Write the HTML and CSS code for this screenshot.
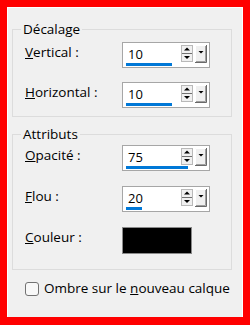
FILE: index.html
```html
<!DOCTYPE html>
<html lang="fr">
<head>
<meta charset="utf-8">
<title>Ombre portée</title>
<link rel="stylesheet" href="styles.css">
</head>
<body>
<div class="panel">
  <fieldset class="group g1">
    <legend>Décalage</legend>
    <div class="rows">
      <label class="lbl"><u>V</u>ertical :</label>
      <div class="spin">
        <div class="spin-top"><span class="val">10</span>
          <svg class="updown" width="12" height="17" viewBox="0 0 12 17"><rect x="0.5" y="0.5" width="11" height="16" fill="#f0f0f0" stroke="#b9b9b9"/><line x1="1" y1="8.5" x2="11" y2="8.5" stroke="#707070"/><path d="M6 2.5 L9 5.5 H3 Z" fill="#000"/><path d="M3 11 H9 L6 14 Z" fill="#000"/></svg>
          <svg class="drop" width="12" height="18" viewBox="0 0 12 18"><rect x="0" y="0" width="12" height="18" fill="#f0f0f0"/><path d="M0.5 17.5 V0.5 H11.5" fill="none" stroke="#fff"/><path d="M11.5 0 V17.5 H0" fill="none" stroke="#696969"/><path d="M10.5 1 V16.5 H1" fill="none" stroke="#a0a0a0"/><path d="M3.5 6 H8.5 L6 8.5 Z" fill="#000"/></svg>
        </div>
        <span class="bar" style="width:46px"></span>
      </div>
      <label class="lbl"><u>H</u>orizontal :</label>
      <div class="spin">
        <div class="spin-top"><span class="val">10</span>
          <svg class="updown" width="12" height="17" viewBox="0 0 12 17"><rect x="0.5" y="0.5" width="11" height="16" fill="#f0f0f0" stroke="#b9b9b9"/><line x1="1" y1="8.5" x2="11" y2="8.5" stroke="#707070"/><path d="M6 2.5 L9 5.5 H3 Z" fill="#000"/><path d="M3 11 H9 L6 14 Z" fill="#000"/></svg>
          <svg class="drop" width="12" height="18" viewBox="0 0 12 18"><rect x="0" y="0" width="12" height="18" fill="#f0f0f0"/><path d="M0.5 17.5 V0.5 H11.5" fill="none" stroke="#fff"/><path d="M11.5 0 V17.5 H0" fill="none" stroke="#696969"/><path d="M10.5 1 V16.5 H1" fill="none" stroke="#a0a0a0"/><path d="M3.5 6 H8.5 L6 8.5 Z" fill="#000"/></svg>
        </div>
        <span class="bar" style="width:46px"></span>
      </div>
    </div>
  </fieldset>
  <fieldset class="group g2">
    <legend>Attributs</legend>
    <div class="rows">
      <label class="lbl"><u>O</u>pacité :</label>
      <div class="spin">
        <div class="spin-top"><span class="val">75</span>
          <svg class="updown" width="12" height="17" viewBox="0 0 12 17"><rect x="0.5" y="0.5" width="11" height="16" fill="#f0f0f0" stroke="#b9b9b9"/><line x1="1" y1="8.5" x2="11" y2="8.5" stroke="#707070"/><path d="M6 2.5 L9 5.5 H3 Z" fill="#000"/><path d="M3 11 H9 L6 14 Z" fill="#000"/></svg>
          <svg class="drop" width="12" height="18" viewBox="0 0 12 18"><rect x="0" y="0" width="12" height="18" fill="#f0f0f0"/><path d="M0.5 17.5 V0.5 H11.5" fill="none" stroke="#fff"/><path d="M11.5 0 V17.5 H0" fill="none" stroke="#696969"/><path d="M10.5 1 V16.5 H1" fill="none" stroke="#a0a0a0"/><path d="M3.5 6 H8.5 L6 8.5 Z" fill="#000"/></svg>
        </div>
        <span class="bar" style="width:62px"></span>
      </div>
      <label class="lbl"><u>F</u>lou :</label>
      <div class="spin">
        <div class="spin-top"><span class="val">20</span>
          <svg class="updown" width="12" height="17" viewBox="0 0 12 17"><rect x="0.5" y="0.5" width="11" height="16" fill="#f0f0f0" stroke="#b9b9b9"/><line x1="1" y1="8.5" x2="11" y2="8.5" stroke="#707070"/><path d="M6 2.5 L9 5.5 H3 Z" fill="#000"/><path d="M3 11 H9 L6 14 Z" fill="#000"/></svg>
          <svg class="drop" width="12" height="18" viewBox="0 0 12 18"><rect x="0" y="0" width="12" height="18" fill="#f0f0f0"/><path d="M0.5 17.5 V0.5 H11.5" fill="none" stroke="#fff"/><path d="M11.5 0 V17.5 H0" fill="none" stroke="#696969"/><path d="M10.5 1 V16.5 H1" fill="none" stroke="#a0a0a0"/><path d="M3.5 6 H8.5 L6 8.5 Z" fill="#000"/></svg>
        </div>
        <span class="bar" style="width:16px"></span>
      </div>
      <label class="lbl"><u>C</u>ouleur :</label>
      <div class="swatch"></div>
    </div>
  </fieldset>
  <label class="check"><input type="checkbox" class="box"><span>Ombre sur le <u>n</u>ouveau calque</span></label>
</div>
</body>
</html>
```
FILE: styles.css
```css
html, body {
  margin: 0;
  padding: 0;
}
body {
  width: 250px;
  height: 325px;
  background: #ff0000;
  font-family: "Open Sans", "Noto Sans", sans-serif;
  font-size: 13.5px;
  color: #000;
  overflow: hidden;
}
.panel {
  box-sizing: border-box;
  margin: 7px;
  width: 236px;
  height: 310px;
  background: #f0f0f0;
  border: 1px solid #fff;
  border-bottom: 0;
  padding: 14px 10px 0 4px;
}
.group {
  margin: 0;
  padding: 0;
  border: 1px solid #dcdcdc;
  min-width: 0;
}
.group legend {
  margin-left: 8px;
  padding: 0 2px;
  font-size: 13.5px;
  line-height: 15px;
}
.g2 {
  margin-top: 10px;
}
.rows {
  display: grid;
  grid-template-columns: 97px auto;
  justify-content: start;
  padding: 5px 0 8px 12px;
  row-gap: 14px;
}
.g2 .rows {
  padding: 3px 0 15px 12px;
  row-gap: 15px;
}
.lbl {
  padding-top: 3px;
  line-height: 15px;
  font-size: 13.5px;
}
.spin {
  box-sizing: border-box;
  width: 88px;
  height: 26px;
  border: 1px solid #a6a6a6;
  background: #fff;
  display: flex;
  flex-direction: column;
  padding: 2px 2px 0 3px;
}
.spin-top {
  display: flex;
  height: 18px;
  align-items: flex-start;
}
.val {
  flex: 1;
  padding-left: 2px;
  font-size: 13px;
  line-height: 18px;
  color: #000;
}
.updown {
  display: block;
  margin-right: 2px;
}
.drop {
  display: block;
}
.bar {
  display: block;
  height: 3px;
  background: #0078d7;
}
.swatch {
  box-sizing: border-box;
  width: 70px;
  height: 27px;
  background: #000;
  border: 1px solid #8a8a8a;
}
.check {
  display: flex;
  align-items: center;
  gap: 5px;
  margin: 11px 0 0 13px;
  font-size: 13.5px;
  line-height: 15px;
}
.box {
  appearance: none;
  -webkit-appearance: none;
  margin: 0;
  width: 14px;
  height: 14px;
  border: 1px solid #727272;
  border-radius: 3px;
  background: #f8f8f8;
}
```
